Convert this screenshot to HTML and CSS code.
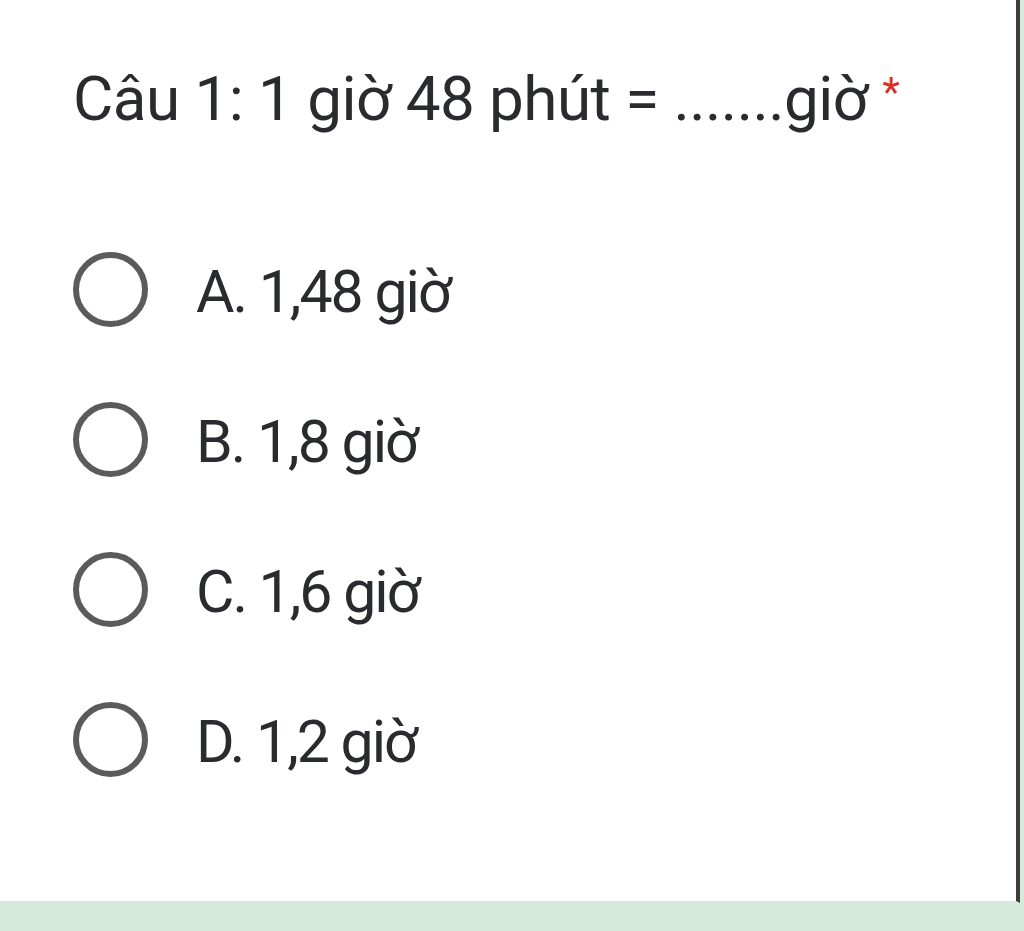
FILE: index.html
```html
<!DOCTYPE html>
<html>
<head>
  <title>Câu 1</title>
  <link rel="stylesheet" href="styles.css">
</head>
<body>
  <div class="question-card">
    <div class="question-title">
      Câu 1: 1 giờ 48 phút = .......giờ <span class="required">*</span>
    </div>

    <div class="question-options">
      <label class="option">
        <span class="radio"></span>
        <span class="option-text">A. 1,48 giờ</span>
      </label>
      <label class="option">
        <span class="radio"></span>
        <span class="option-text">B. 1,8 giờ</span>
      </label>
      <label class="option">
        <span class="radio"></span>
        <span class="option-text">C. 1,6 giờ</span>
      </label>
      <label class="option">
        <span class="radio"></span>
        <span class="option-text">D. 1,2 giờ</span>
      </label>
    </div>
  </div>
</body>
</html>
```

FILE: styles.css
```css
body {
  margin: 0;
  background-color: #d4eadb;
  height: 931px;
  overflow: hidden;
}

.question-card {
  width: 1020px;
  height: 903px;
  box-sizing: border-box;
  background-color: #fff;
  border-right: 4px solid #3c3c3c;
  border-bottom: 2px solid #e0e3e0;
  padding: 55px 0 0 73px;
}

.question-title {
  font-family: Roboto, sans-serif;
  font-size: 62px;
  line-height: 76px;
  color: #2a2b2e;
  letter-spacing: -0.55px;
}

.required {
  color: #d93025;
  font-size: 40px;
  vertical-align: 14px;
}

.question-options {
  margin-top: 115px;
  display: flex;
  flex-direction: column;
  gap: 75px;
}

.option {
  display: flex;
  align-items: flex-start;
  gap: 48px;
  height: 75px;
}

.radio {
  width: 63px;
  height: 63px;
  border: 6px solid #5b5b5b;
  border-radius: 50%;
  flex-shrink: 0;
}

.option-text {
  font-family: Roboto, sans-serif;
  font-size: 59px;
  line-height: 67px;
  padding-top: 6px;
  letter-spacing: -2px;
  color: #2a2b2e;
}
```
